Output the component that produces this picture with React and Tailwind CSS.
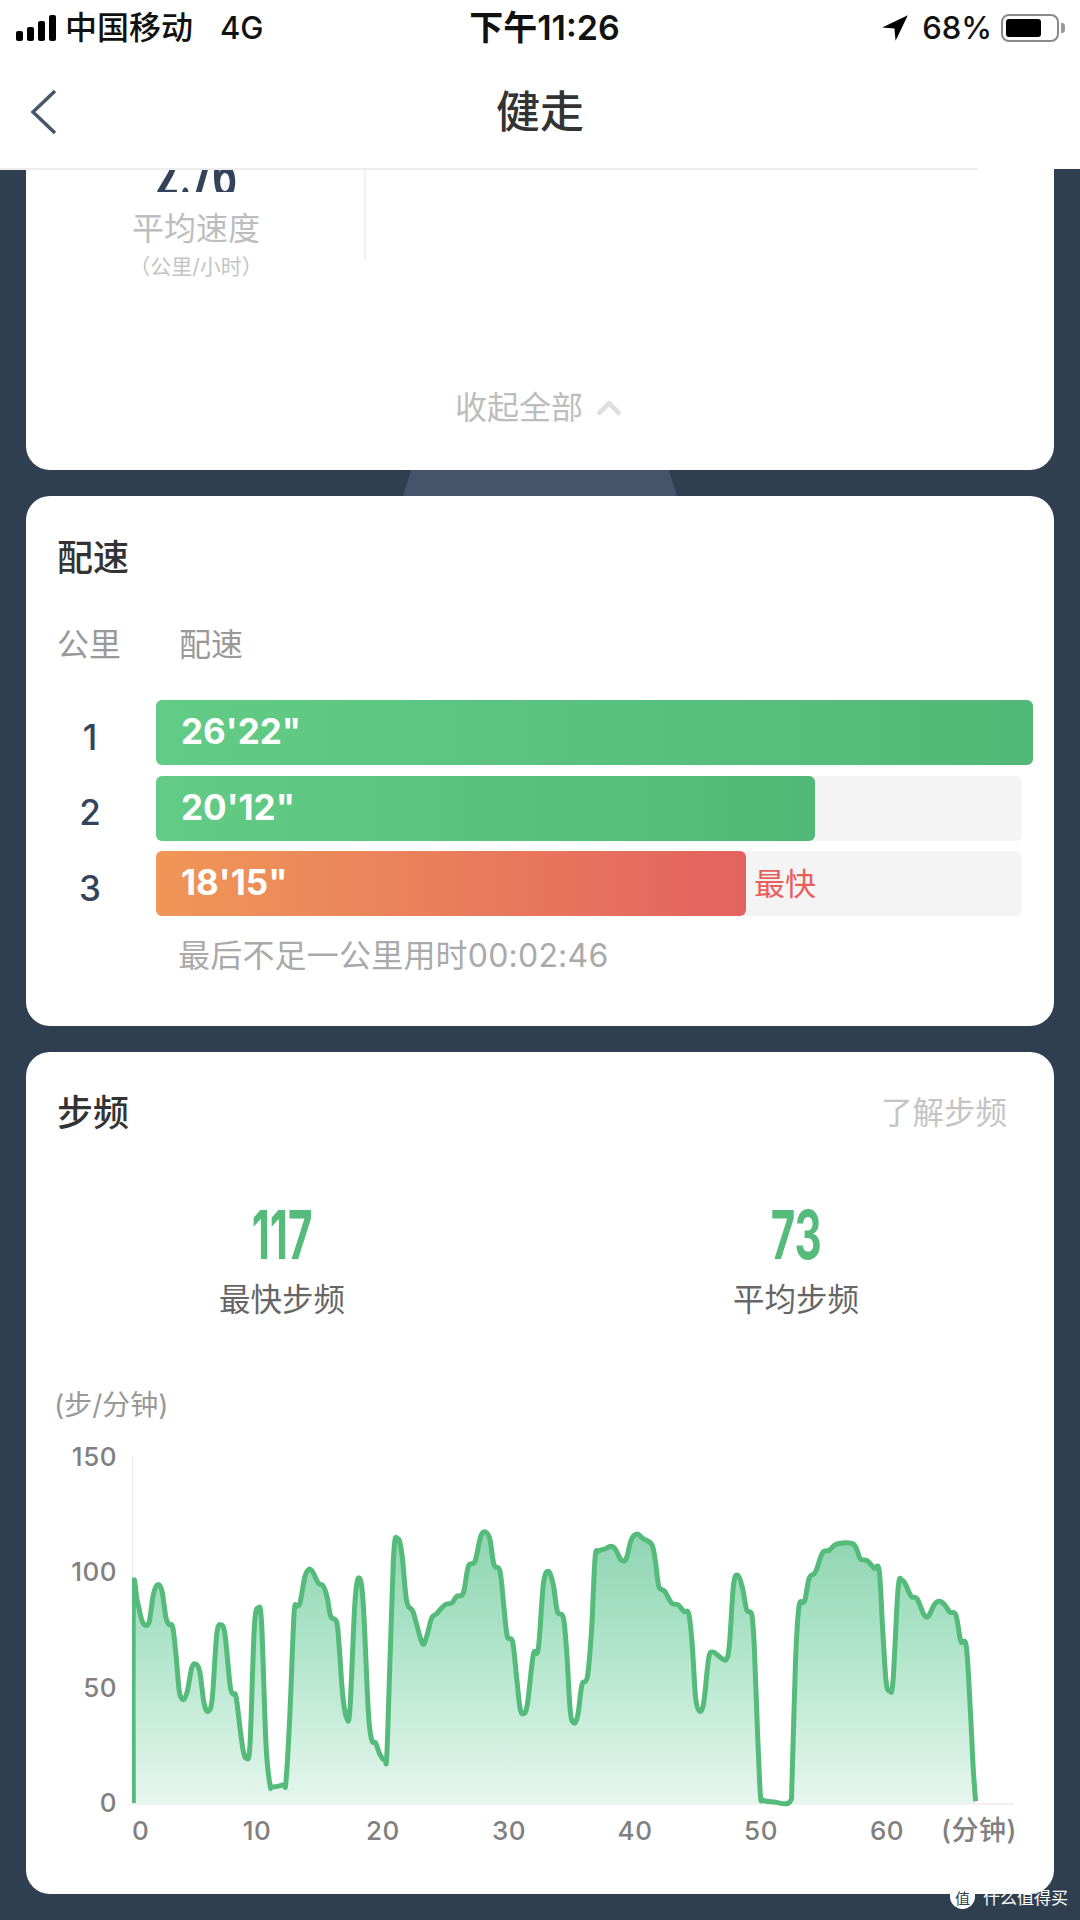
import { ChevronUp } from "lucide-react";

const left = [
  [280, 1125], [280, 497], [292, 520], [305, 575], [316, 592], [328, 580], [340, 500], [353, 470], [366, 490], [378, 570],
  [388, 590], [398, 597], [408, 680], [418, 790], [430, 815], [442, 790], [455, 720], [467, 708], [479, 730], [492, 825],
  [505, 850], [517, 810], [530, 620], [543, 590], [555, 620], [570, 770], [578, 797], [588, 805], [600, 900], [610, 970],
  [619, 990], [630, 950], [643, 600], [655, 540], [665, 590], [678, 950], [690, 1070], [697, 1077], [730, 1070], [738, 1060],
  [750, 850], [762, 560], [770, 535], [780, 525], [795, 445], [808, 423], [820, 435], [835, 465], [850, 475], [862, 510],
  [872, 565], [890, 582], [898, 660], [908, 800], [920, 870], [930, 840], [945, 520], [958, 450], [970, 530], [985, 850],
  [995, 935], [1007, 945], [1020, 980], [1035, 995], [1042, 950], [1060, 400], [1073, 332], [1086, 380], [1100, 520], [1118, 548],
  [1130, 590], [1148, 648], [1160, 625], [1175, 570], [1190, 557], [1215, 530], [1235, 525], [1250, 505], [1270, 495], [1285, 415],
  [1305, 400], [1322, 325], [1337, 312], [1350, 335], [1362, 410], [1380, 430], [1392, 540], [1402, 625], [1418, 642], [1430, 750],
  [1440, 840], [1450, 857], [1462, 830], [1480, 680], [1495, 662], [1510, 470], [1525, 430], [1540, 470], [1552, 550],
];

const right = [
  [68, 570], [78, 680], [88, 850], [99, 885], [110, 860], [122, 770], [138, 745], [150, 600], [160, 390], [170, 370],
  [190, 362], [205, 355], [218, 362], [235, 395], [250, 393], [265, 335], [282, 318], [300, 332], [325, 350], [335, 400],
  [345, 475], [362, 490], [382, 525], [400, 530], [418, 550], [432, 558], [442, 650], [452, 810], [464, 850], [476, 820],
  [490, 690], [502, 672], [520, 685], [540, 695], [550, 650], [562, 470], [575, 442], [588, 480], [600, 545], [615, 560],
  [622, 650], [632, 920], [640, 1100], [648, 1117], [680, 1122], [725, 1122], [732, 1050], [742, 700], [752, 535], [768, 520],
  [782, 450], [800, 432], [820, 375], [840, 367], [862, 348], [910, 348], [930, 392], [950, 398], [970, 420], [985, 428],
  [995, 600], [1005, 760], [1015, 788], [1025, 760], [1040, 480], [1052, 458], [1062, 470], [1078, 505], [1095, 512], [1115, 560],
  [1128, 565], [1145, 530], [1160, 520], [1175, 530], [1190, 552], [1208, 562], [1222, 640], [1238, 655], [1250, 850], [1258, 1020],
  [1265, 1120],
];

const points = [
  ...left.map(([x, y]) => [40 + x / 3, 1430 + y / 3]),
  ...right.map(([x, y]) => [540 + x / 2.904, 1430 + y / 3]),
];

// smooth the traced points into cubic segments
const smooth = (pts) => {
  let d = `M${pts[0][0]} ${pts[0][1]}`;
  for (let i = 0; i < pts.length - 1; i++) {
    const p0 = pts[i - 1] || pts[i];
    const p1 = pts[i];
    const p2 = pts[i + 1];
    const p3 = pts[i + 2] || p2;
    const c1x = p1[0] + (p2[0] - p0[0]) / 6;
    const c1y = p1[1] + (p2[1] - p0[1]) / 6;
    const c2x = p2[0] - (p3[0] - p1[0]) / 6;
    const c2y = p2[1] - (p3[1] - p1[1]) / 6;
    d += `C${c1x.toFixed(1)} ${c1y.toFixed(1)} ${c2x.toFixed(1)} ${c2y.toFixed(1)} ${p2[0].toFixed(1)} ${p2[1].toFixed(1)}`;
  }
  return d;
};

const linePath = smooth(points);
const areaPath = `${linePath}L${points[points.length - 1][0].toFixed(1)} 1806L${points[0][0]} 1806Z`;

const rows = [
  { km: "1", pace: "26'22\"", track: "w-[866px]", bar: "w-[877px]", color: "from-[#62cc86] to-[#52b877]" },
  { km: "2", pace: "20'12\"", track: "w-[866px]", bar: "w-[659px]", color: "from-[#62cc86] to-[#52b877]" },
  { km: "3", pace: "18'15\"", track: "w-[866px]", bar: "w-[590px]", color: "from-[#ef9757] to-[#e3625f]", fastest: true },
];

function StatusBar() {
  return (
    <div className="h-[54px] flex items-center justify-between pl-[16px] pr-[15px] pt-[2px] text-[31px] leading-[40px] font-medium text-[#111]">
      <div className="w-[300px] flex items-center">
        <div className="flex items-end gap-[4px] h-[26px]">
          <div className="w-[7px] h-[10px] rounded-[2px] bg-black" />
          <div className="w-[7px] h-[14px] rounded-[2px] bg-black" />
          <div className="w-[7px] h-[20px] rounded-[2px] bg-black" />
          <div className="w-[7px] h-[26px] rounded-[2px] bg-black" />
        </div>
        <span className="ml-[9px] text-[32px]">中国移动</span>
        <span className="ml-[27px] text-[31px]">4G</span>
      </div>
      <div className="ml-[8px] text-[34px] font-semibold">下午11:26</div>
      <div className="w-[300px] flex items-center justify-end">
        <svg width="28" height="28" viewBox="0 0 24 24">
          <path d="M23 1L1 11.5L11.5 12.5L12.5 23Z" fill="#000" />
        </svg>
        <span className="ml-[13px] mr-[9px]">68%</span>
        <div className="w-[58px] h-[28px] rounded-[8px] border-2 border-[#8a8a8a] p-[3px]">
          <div className="w-[35px] h-full rounded-[3px] bg-black" />
        </div>
        <div className="w-[4px] h-[10px] rounded-r-[3px] bg-[#9a9a9a] ml-[2px]" />
      </div>
    </div>
  );
}

export default function App() {
  return (
    <div className="w-[1080px] h-[1920px] overflow-hidden relative flex flex-col bg-[#303f50] font-['Inter','Noto_Sans_CJK_SC',sans-serif]">
      <div className="h-[169px] shrink-0 bg-white relative z-10">
        <StatusBar />
        <div className="h-[115px] relative flex items-center justify-center">
          <svg className="absolute left-[29px] top-[34px]" width="30" height="48" viewBox="0 0 30 48" fill="none">
            <path d="M26 3L4 24L26 45" stroke="#47576b" strokeWidth="3.5" />
          </svg>
          <span className="text-[44px] leading-[56px] font-medium text-[#333]">健走</span>
        </div>
        <div className="absolute left-0 top-[168px] w-[978px] h-[2px] bg-[#ececec]" />
      </div>

      <div className="mx-[26px] h-[301px] shrink-0 rounded-b-[24px] bg-white flex flex-col">
        <div className="h-[206px] flex items-start">
          <div className="w-[340px] h-[91px] border-r-2 border-[#f2f2f2]">
            <div className="w-[340px] flex flex-col items-center">
              <div className="h-[23px] overflow-hidden relative w-[170px]">
                <span className="absolute left-0 right-0 bottom-[-15px] text-center text-[68px] leading-[68px] font-bold text-[#33445a] scale-x-[0.56]">2.76</span>
              </div>
              <div className="mt-[17px] text-[32px] leading-[40px] text-[#bdbdbd]">平均速度</div>
              <div className="mt-[5px] text-[21px] leading-[26px] text-[#c4c4c4]">（公里/小时）</div>
            </div>
          </div>
        </div>
        <div className="flex items-center justify-center h-[40px] mt-[13px] pl-[3px] text-[32px] leading-[40px] text-[#bdbdbd]">
          <span className="mr-[7px]">收起全部</span>
          <ChevronUp className="w-[38px] h-[38px] text-[#dfdfdf]" strokeWidth={3} />
        </div>
      </div>

      <div className="h-[26px] shrink-0 flex justify-center">
        <div className="w-[274px] h-full bg-[#43546b] [clip-path:polygon(3%_0,97%_0,100%_100%,0_100%)]" />
      </div>

      <div className="mx-[26px] h-[530px] shrink-0 rounded-[24px] bg-white pt-[40px] pl-[32px]">
        <div className="-ml-[1px] text-[36px] leading-[44px] font-medium text-[#333]">配速</div>
        <div className="mt-[45px] -ml-[1px] flex text-[32px] leading-[40px] text-[#999]">
          <span className="w-[122px]">公里</span>
          <span>配速</span>
        </div>
        <div className="mt-[35px] flex flex-col gap-[10.5px]">
          {rows.map((r) => (
            <div key={r.km} className="flex items-center">
              <div className="w-[98px] pr-[34px] pt-[8px] text-center text-[35px] leading-[44px] font-medium text-[#33445a]">{r.km}</div>
              <div className={`${r.track} h-[65px] rounded-[6px] bg-[#f4f4f4] flex items-center`}>
                <div className={`${r.bar} h-full shrink-0 rounded-[6px] bg-linear-to-r ${r.color} flex items-center pl-[25px] pb-[2px] text-[35px] font-bold text-white`}>
                  {r.pace}
                </div>
                {r.fastest && <span className="ml-[8px] text-[31px] leading-[40px] text-[#e8605c]">最快</span>}
              </div>
            </div>
          ))}
        </div>
        <div className="mt-[20px] ml-[120px] text-[32px] leading-[40px] tracking-[0.2px] text-[#aaa]">最后不足一公里用时00:02:46</div>
      </div>

      <div className="h-[26px] shrink-0" />

      <div className="mx-[26px] h-[842px] shrink-0 rounded-[24px] bg-white pt-[39px]">
        <div className="flex items-center justify-between pl-[31px] pr-[47px]">
          <span className="text-[36px] leading-[44px] font-medium text-[#333]">步频</span>
          <span className="text-[31.5px] leading-[40px] text-[#c4c4c4]">了解步频</span>
        </div>
        <div className="mt-[63px] flex">
          <div className="w-[512px] flex flex-col items-center">
            <div className="text-[68px] leading-[72px] font-bold text-[#55bb7a] scale-x-[0.62]">117</div>
            <div className="mt-[10px] text-[31.5px] leading-[40px] text-[#666]">最快步频</div>
          </div>
          <div className="w-[516px] flex flex-col items-center">
            <div className="text-[68px] leading-[72px] font-bold text-[#55bb7a] scale-x-[0.62]">73</div>
            <div className="mt-[10px] text-[31.5px] leading-[40px] text-[#666]">平均步频</div>
          </div>
        </div>
        <div className="mt-[67px] pl-[28px] text-[28px] leading-[36px] text-[#999]">(步/分钟)</div>
        <div className="mt-[17px] flex items-start">
          <div className="w-[91px] h-[376px] mt-[2px] flex flex-col justify-between items-end text-[26px] leading-[30px] tracking-[0.5px] font-medium text-[#808080]">
            <span>150</span>
            <span>100</span>
            <span>50</span>
            <span>0</span>
          </div>
          <svg className="ml-[15px] mt-[8px]" width="882" height="362" viewBox="132 1450 882 362">
            <defs>
              <linearGradient id="area" x1="0" y1="1535" x2="0" y2="1806" gradientUnits="userSpaceOnUse">
                <stop offset="0" stopColor="#8fd4b2" />
                <stop offset="0.35" stopColor="#a9e2c6" />
                <stop offset="1" stopColor="#e6f6ee" />
              </linearGradient>
            </defs>
            <path d="M132.5 1458V1806H1014" fill="none" stroke="#eeeeee" strokeWidth="1.5" />
            <path d={areaPath} fill="url(#area)" />
            <path d={linePath} fill="none" stroke="#55bb7a" strokeWidth="5" strokeLinejoin="round" />
          </svg>
        </div>
        <div className="-mt-[2px] flex items-center text-[26px] leading-[30px] tracking-[0.5px] font-medium text-[#808080]">
          <span className="w-[168px] pl-[106px]">0</span>
          <span className="w-[126px] text-center">10</span>
          <span className="w-[126px] text-center">20</span>
          <span className="w-[126px] text-center">30</span>
          <span className="w-[126px] text-center">40</span>
          <span className="w-[126px] text-center">50</span>
          <span className="w-[126px] text-center">60</span>
          <span className="-ml-[9px] text-[27px] whitespace-nowrap">(分钟)</span>
        </div>
      </div>

      <div className="absolute left-[950px] top-[1887px] flex items-center gap-[8px] text-white">
        <div className="w-[25px] h-[22px] rounded-b-full bg-white flex items-center justify-center text-[15px] leading-none text-[#303f50]">值</div>
        <span className="text-[17px] leading-[22px] whitespace-nowrap">什么值得买</span>
      </div>
    </div>
  );
}
